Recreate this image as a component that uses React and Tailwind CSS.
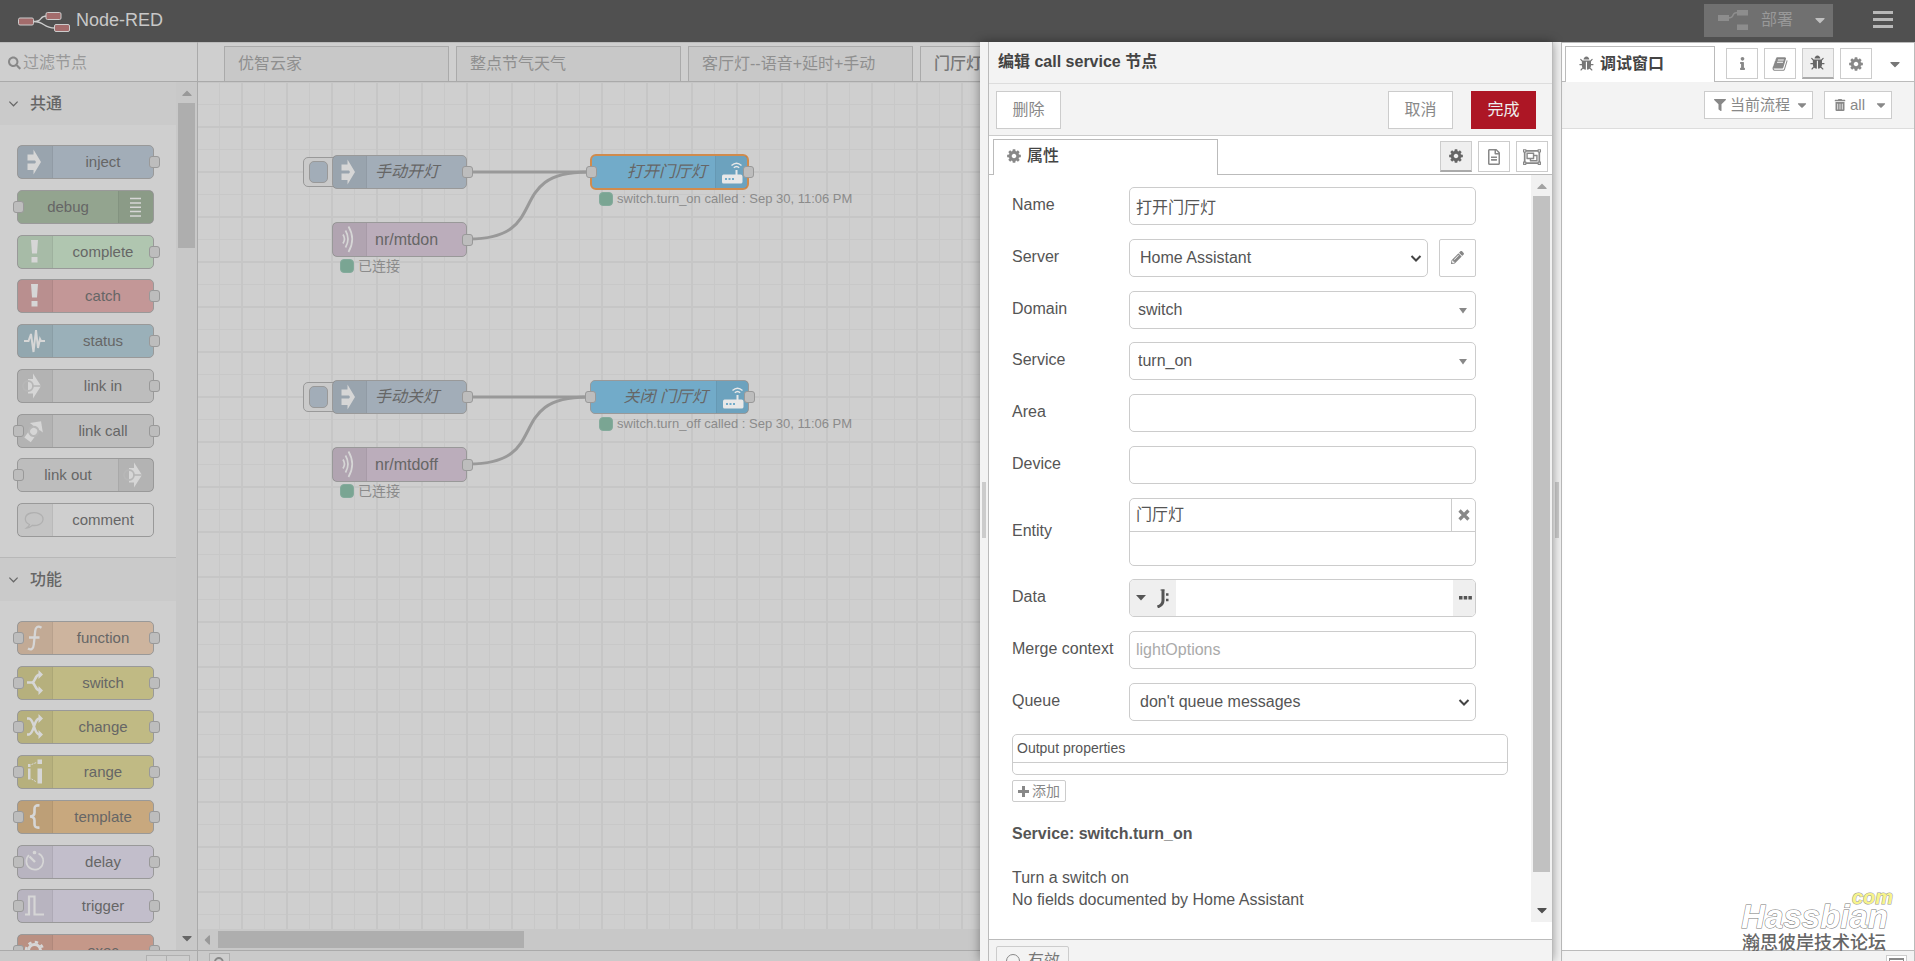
import { useState } from "react";
import {
  FaCaretDown,
  FaFilter,
  FaInfo,
  FaPencilAlt,
  FaRegFileAlt,
  FaRegObjectGroup,
  FaSearch,
  FaTrashAlt,
} from "react-icons/fa";

const CogIcon = ({ className }) => (
  <svg viewBox="0 0 1792 1792" className={className} fill="currentColor">
    <path d="M1152 896q0-106-75-181t-181-75-181 75-75 181 75 181 181 75 181-75 75-181zm512-109v222q0 12-8 23t-20 13l-185 28q-19 54-39 91 35 50 107 138 10 12 10 25t-9 23q-27 37-99 108t-94 71q-12 0-26-9l-138-108q-44 23-91 38-16 136-29 186-7 28-36 28h-222q-14 0-24.5-8.5t-11.5-21.5l-28-184q-49-16-90-37l-141 107q-10 9-25 9-14 0-25-11-126-114-165-168-7-10-7-23 0-12 8-23 15-21 51-66.5t54-70.5q-27-50-41-99l-183-27q-13-2-21-12.5t-8-23.5v-222q0-12 8-23t19-13l186-28q14-46 39-92-40-57-107-138-10-12-10-24 0-10 9-23 26-36 98.5-107.5t94.5-71.5q13 0 26 10l138 107q44-23 91-38 16-136 29-186 7-28 36-28h222q14 0 24.5 8.5t11.5 21.5l28 184q49 16 90 37l142-107q9-9 24-9 13 0 25 10 129 119 165 170 7 8 7 22 0 12-8 23-15 21-51 66.5t-54 70.5q26 50 41 98l183 28q13 2 21 12.5t8 23.5z" />
  </svg>
);

const BugIcon = ({ className }) => (
  <svg viewBox="0 0 1792 1792" className={className} fill="currentColor">
    <path d="M1632 960q0 26-19 45t-45 19h-224q0 171-67 290l208 209q19 19 19 45t-19 45q-18 19-45 19t-45-19l-198-197q-5 5-15 13t-42 28.5-65 36.5-82 29-97 13v-896h-128v896q-51 0-101.5-13.5t-87-33-66-39-43.5-32.5l-15-14-183 207q-20 21-48 21-24 0-43-16-19-18-20.5-44.5t15.5-46.5l202-227q-58-114-58-274h-224q-26 0-45-19t-19-45 19-45 45-19h224v-294l-173-173q-19-19-19-45t19-45 45-19 45 19l173 173h844l173-173q19-19 45-19t45 19 19 45-19 45l-173 173v294h224q26 0 45 19t19 45zm-480-576h-640q0-133 93.5-226.5t226.5-93.5 226.5 93.5 93.5 226.5z" />
  </svg>
);

const BookIcon = ({ className }) => (
  <svg viewBox="0 0 1792 1792" className={className} fill="currentColor">
    <path d="M1703 478q40 57 18 129l-275 906q-19 64-76.5 107.5t-122.5 43.5h-923q-77 0-148.5-53.5t-99.5-131.5q-24-67-2-127 0-4 3-27t4-37q1-8-3-21.5t-3-19.5q2-11 8-21t16.5-23.5 16.5-23.5q23-38 45-91.5t30-91.5q3-10 .5-30t-.5-28q3-11 17-28t17-23q21-36 42-92t25-90q1-9-2.5-32t.5-28q4-13 22-30.5t22-22.5q19-26 42.5-84.5t27.5-96.5q1-8-3-25.5t-2-26.5q2-8 9-18t18-23 17-21q8-12 16.5-30.5t15-35 16-36 19.5-32 26.5-23.5 36-11.5 47.5 5.5l-1 3q38-9 51-9h761q74 0 114 56t18 130l-274 906q-36 119-71.5 153.5t-128.5 34.5h-869q-27 0-38 15-11 16-1 43 24 70 144 70h923q29 0 56-15.5t35-41.5l300-987q7-22 5-57 38 15 59 43zm-1064 2q-4 13 2 22.5t20 9.5h608q13 0 25.5-9.5t16.5-22.5l21-64q4-13-2-22.5t-20-9.5h-608q-13 0-25.5 9.5t-16.5 22.5zm-83 256q-4 13 2 22.5t20 9.5h608q13 0 25.5-9.5t16.5-22.5l21-64q4-13-2-22.5t-20-9.5h-608q-13 0-25.5 9.5t-16.5 22.5z" />
  </svg>
);

const ICON_SHAPES = {
  inject: (
    <path
      fill="currentColor"
      d="M10.5 9.5H16.5V4.5L24 17L16.5 29.5V25H10.5V18.5H18L19 17L18 15.5H10.5z"
    />
  ),
  debug: (
    <path
      stroke="currentColor"
      strokeWidth="1.5"
      d="M12 8.5h11M12 13h11M12 17.2h11M12 21.5h11M12 26h11"
    />
  ),
  alert: (
    <path fill="currentColor" d="M14 5h7l-1 13.5h-5zM14.5 22h6v5.5h-6z" />
  ),
  status: (
    <path
      stroke="currentColor"
      strokeWidth="2"
      fill="none"
      d="M7 17H11.5L14 10L16.5 28L19 6L21 24L23 15L24 17H28"
    />
  ),
  link: (
    <>
      <path fill="currentColor" d="M11 10h5V4.5L24 17L16 29.5V24.5H11z" />
      <circle cx="11" cy="17" r="5" fill="none" stroke="#b7b7b7" strokeWidth="1.8" />
      <path d="M16 17H24" stroke="#b7b7b7" strokeWidth="1.6" />
    </>
  ),
  call: (
    <g transform="rotate(-54 17 17)">
      <path fill="currentColor" d="M6 13H21V9L29 17L21 25V21H6z" />
      <circle cx="16.5" cy="17" r="4.6" fill="currentColor" stroke="#b7b7b7" strokeWidth="2.2" />
    </g>
  ),
  comment: (
    <path
      fill="none"
      stroke="#b0b0b0"
      strokeWidth="1.3"
      d="M12.5 21.5C6.5 19 7 11.500 14 10C20 8.8 26.5 11.5 26 16.5C25.5 21.5 19.5 23 15.5 22.3C13.5 24 11.5 25 9.5 25C11 24 12.3 23 12.5 21.5z"
    />
  ),
  fn: (
    <path
      fill="none"
      stroke="currentColor"
      strokeWidth="2.3"
      d="M24.5 6.8C20.5 4.3 18.6 6.5 18.2 10L16.8 23.5C16.3 28.5 14 29.3 11 27.6M12 16.5H22.5"
    />
  ),
  switch: (
    <g fill="none" stroke="currentColor" strokeWidth="2.6">
      <path d="M10 16.5H15.5C18.5 15 18 9 22.5 8.5M15.5 16.5C18.5 18 18 24 22.5 24.5" />
      <path fill="currentColor" stroke="none" d="M21.5 4L26 8.5L21.5 13zM21.5 20L26 24.5L21.5 29z" />
    </g>
  ),
  change: (
    <g fill="none" stroke="currentColor" strokeWidth="2.5">
      <path d="M10 8.5H12C17.5 9.5 16.5 23.5 22 24.5M10 24.5H12C17.5 23.5 16.5 9.5 22 8.5" />
      <path fill="currentColor" stroke="none" d="M21.5 4L26 8.5L21.5 13zM21.5 20L26 24.5L21.5 29z" />
    </g>
  ),
  range: (
    <g fill="currentColor">
      <path d="M11 9h2.500v3H11zM11 13.500h2.5v11H11zM20.500 4.500h4.5v4.500h-4.5zM20.500 13.500h4.500v15h-4.500z" />
      <path fill="none" stroke="currentColor" strokeDasharray="2 1" d="M14.5 9.5L19.5 7.5M14.5 24L19.5 27" />
    </g>
  ),
  template: (
    <path
      fill="none"
      stroke="currentColor"
      strokeWidth="2.6"
      d="M22.5 5.5C18.5 5 17.5 6.5 17.5 9V12.500C17.5 15 16.5 16.3 13 16.5C16.5 16.7 17.5 18 17.5 20.5V24C17.5 26.5 18.5 28 22.500 27.5"
    />
  ),
  delay: (
    <g fill="none" stroke="currentColor" strokeWidth="1.7">
      <path d="M12 10A8.5 8.5 0 1 0 21.5 8.5" />
      <path strokeWidth="2.4" d="M12.5 11.5L18 17" />
      <circle cx="17.5" cy="7.5" r="1" fill="currentColor" />
    </g>
  ),
  trigger: (
    <path
      fill="none"
      stroke="currentColor"
      strokeWidth="2.2"
      d="M8 25.5H12V7.5H17.5V25.5H27"
    />
  ),
  exec: (
    <svg x="7" y="6" width="21" height="21" viewBox="0 0 21 21">
      <circle cx="10.5" cy="10.5" r="6" fill="none" stroke="currentColor" strokeWidth="3" />
      <circle cx="10.5" cy="10.5" r="8.5" fill="none" stroke="currentColor" strokeWidth="2.5" strokeDasharray="3.34 3.34" />
    </svg>
  ),
  mqtt: (
    <g fill="none" stroke="currentColor" strokeWidth="1.7">
      <path d="M11 12.5Q14 17 11 21.5M13.5 8.5Q18.5 17 13.5 25.5M16.5 4.5Q24 17 16.5 30" />
    </g>
  ),
  router: (
    <g fill="currentColor">
      <path d="M8.5 19.5H20.5V15H22.5V19.5H25.5Q27.5 19.5 27.5 21.5V27Q27.5 28.5 25.5 28.5H8.5Q7 28.5 7 27V21.5Q7 19.5 8.5 19.5z" />
      <path fill="#72abc9" d="M10 23h2v2h-2zM13.5 23h2v2h-2zM17 23h2v2h-2z" />
      <path
        fill="none"
        stroke="currentColor"
        strokeWidth="1.4"
        d="M18.8 12.8Q21.5 10.2 24.2 12.8M16.5 10.5Q21.5 5.8 26.5 10.5"
      />
    </g>
  ),
};

const NodeIcon = ({ name, className }) => (
  <svg viewBox="0 0 34 34" width="34" height="34" className={className}>
    {ICON_SHAPES[name]}
  </svg>
);

const Port = ({ className }) => (
  <span
    className={`absolute top-1/2 -translate-y-1/2 w-[11px] h-3 rounded-[3px] border border-[#999] bg-[#bdbdbd] ${className}`}
  />
);

const commonNodes = [
  { label: "inject", icon: "inject", color: "bg-[#a2adb8]", out: true },
  { label: "debug", icon: "debug", color: "bg-[#93a48f]", in: true, right: true },
  { label: "complete", icon: "alert", color: "bg-[#b0c6b0]", out: true },
  { label: "catch", icon: "alert", color: "bg-[#c39797]", out: true },
  { label: "status", icon: "status", color: "bg-[#9ab0b9]", out: true },
  { label: "link in", icon: "link", color: "bg-[#bdbdbd]", out: true },
  { label: "link call", icon: "call", color: "bg-[#bdbdbd]", in: true, out: true },
  { label: "link out", icon: "link", color: "bg-[#bdbdbd]", in: true, right: true },
  { label: "comment", icon: "comment", color: "bg-[#cfcfcf]" },
];

const functionNodes = [
  { label: "function", icon: "fn", color: "bg-[#cdb49e]", in: true, out: true },
  { label: "switch", icon: "switch", color: "bg-[#c0ba84]", in: true, out: true },
  { label: "change", icon: "change", color: "bg-[#c0ba84]", in: true, out: true },
  { label: "range", icon: "range", color: "bg-[#c0ba84]", in: true, out: true },
  { label: "template", icon: "template", color: "bg-[#c8a87e]", in: true, out: true },
  { label: "delay", icon: "delay", color: "bg-[#c2becb]", in: true, out: true },
  { label: "trigger", icon: "trigger", color: "bg-[#c2becb]", in: true, out: true },
  { label: "exec", icon: "exec", color: "bg-[#c59889]", in: true, out: true },
];

const PaletteNode = ({ node }) => (
  <div
    className={`relative shrink-0 flex w-[137px] h-[34px] rounded-[5px] border border-[#999] text-[15px] text-[#666] ${
      node.color
    } ${node.right ? "flex-row-reverse" : ""}`}
  >
    <div
      className={`w-[35px] shrink-0 overflow-hidden border-black/5 bg-black/5 text-[#d6d6d6] ${
        node.right ? "border-l" : "border-r"
      }`}
    >
      <NodeIcon name={node.icon} className="-mt-px -ml-px" />
    </div>
    <span className="flex-1 text-center leading-8">{node.label}</span>
    {node.in && <Port className="-left-[5px]" />}
    {node.out && <Port className="-right-[7px]" />}
  </div>
);

const PaletteCategory = ({ title, children }) => (
  <>
    <h2 className="shrink-0 flex items-center h-[43px] pl-2 bg-[#cacaca] text-base font-medium text-[#666]">
      <svg viewBox="0 0 12 12" className="w-[11px] h-[11px] mr-[11px]" fill="none" stroke="currentColor" strokeWidth="1.3">
        <path d="M1.5 4L6 8.5L10.5 4" />
      </svg>
      {title}
    </h2>
    {children}
  </>
);

const Palette = () => (
  <aside className="w-[198px] shrink-0 flex flex-col border-r border-[#aaa]">
    <label className="flex items-center h-10 shrink-0 pl-2 pt-[2px] border-t border-b border-t-[#bbb] border-b-[#aaa]">
      <FaSearch className="w-[14px] h-[14px] mr-[2px] text-[#888]" />
      <input
        type="text"
        aria-label="过滤节点"
        placeholder="过滤节点"
        className="w-full bg-transparent outline-none text-base placeholder:text-[#999]"
      />
    </label>
    <div className="flex-1 min-h-0 flex">
      <div className="flex-1 flex flex-col overflow-hidden">
        <PaletteCategory title="共通">
          <div className="shrink-0 flex flex-col justify-between h-[392px] ml-[17px] my-5">
            {commonNodes.map((node) => (
              <PaletteNode key={node.label} node={node} />
            ))}
          </div>
        </PaletteCategory>
        <div className="border-t border-[#b8b8b8]" />
        <PaletteCategory title="功能">
          <div className="shrink-0 flex flex-col justify-between h-[347px] ml-[17px] mt-5">
            {functionNodes.map((node) => (
              <PaletteNode key={node.label} node={node} />
            ))}
          </div>
        </PaletteCategory>
      </div>
      <div className="w-[21px] flex flex-col items-center bg-[#c8c8c8] pt-1 pb-1">
        <FaCaretDown className="rotate-180 w-4 h-4 text-[#999] shrink-0" />
        <div className="w-[17px] h-[145px] mt-px bg-[#aeaeae]" />
        <div className="flex-1" />
        <FaCaretDown className="w-4 h-4 text-[#666] shrink-0" />
      </div>
    </div>
    <div className="flex justify-end h-[11px] shrink-0 overflow-hidden border-t border-[#aaa] bg-[#cacaca] pt-1 pr-[7px]">
      <button aria-label="折叠" className="w-[21px] h-5 border border-[#b0b0b0] bg-[#cecece]" />
      <button aria-label="展开" className="w-[23px] h-5 border border-l-0 border-[#b0b0b0] bg-[#cecece]" />
    </div>
  </aside>
);

const flows = ["优智云家", "整点节气天气", "客厅灯--语音+延时+手动"];

const StatusLine = ({ className, children }) => (
  <div className={`absolute flex items-center gap-1 h-4 whitespace-nowrap text-[#8b8b8b] ${className}`}>
    <span className="w-[14px] h-[14px] rounded-[4px] border border-[#84ab9c] bg-[#7aa593]" />
    {children}
  </div>
);

// one trigger + one mqtt input wired to a call service node
const FlowGroup = ({ className, inject, topic, service, status, selected }) => (
  <div className={`absolute left-[105px] w-[580px] h-[120px] text-base text-[#666] ${className}`}>
    <svg width="580" height="120" className="absolute inset-0" fill="none" stroke="#999" strokeWidth="3">
      <path d="M166 18H284" />
      <path d="M166 85C250 85 200 18 284 18" />
    </svg>
    <button
      aria-label={inject}
      className="absolute left-0 top-[3px] w-10 h-[30px] rounded-[5px] border border-[#999] bg-[#cacaca]"
    >
      <span className="absolute left-[5px] top-[3px] w-[19px] h-[22px] rounded-[5px] border border-[#999] bg-[#a2adb8]" />
    </button>
    <div className="absolute left-[29px] top-px flex w-[135px] h-[34px] rounded-[5px] border border-[#999] bg-[#a2adb8]">
      <div className="w-[34px] overflow-hidden border-r border-black/5 bg-black/5 text-[#d6d6d6]">
        <NodeIcon name="inject" className="-mt-px -ml-[2px]" />
      </div>
      <span className="pl-2 italic leading-8">{inject}</span>
      <Port className="-right-[7px]" />
    </div>
    <div className="absolute left-[29px] top-[68px] flex w-[135px] h-[35px] rounded-[5px] border border-[#999] bg-[#bbadbb]">
      <div className="w-[34px] overflow-hidden border-r border-black/5 bg-black/5 text-[#d6d6d6]">
        <NodeIcon name="mqtt" className="-mt-px -ml-px" />
      </div>
      <span className="pl-2 leading-[34px]">{topic}</span>
      <Port className="-right-[7px]" />
    </div>
    <StatusLine className="left-[37px] top-[104px] text-sm">已连接</StatusLine>
    <div
      className={`absolute left-[287px] flex justify-end w-[159px] bg-[#72abc9] ${
        selected
          ? "top-0 h-9 rounded-[6px] border-2 border-[#d08b4d]"
          : "top-px h-[34px] rounded-[5px] border border-[#999]"
      }`}
    >
      <span className="pr-2 italic leading-8">{service}</span>
      <div className="w-8 overflow-hidden border-l border-black/5 bg-black/5 text-[#e8e8e8]">
        <NodeIcon name="router" className="-mt-px -ml-px" />
      </div>
      <Port className="-left-[6px]" />
      <Port className="-right-[7px]" />
    </div>
    <StatusLine className="left-[296px] top-[37px] text-[13px] leading-[18px]">{status}</StatusLine>
  </div>
);

const Workspace = () => (
  <main className="flex-1 min-w-0 flex flex-col overflow-hidden">
    <nav className="shrink-0 flex items-end gap-[7px] h-10 pl-[26px] border-t border-b border-t-[#bbb] border-b-[#aaa] overflow-hidden">
      {flows.map((name) => (
        <button
          key={name}
          className="shrink-0 w-[225px] h-[35px] px-[13px] text-left text-base text-[#8f8f8f] whitespace-nowrap border border-b-0 border-[#aaa] bg-[#c8c8c8]"
        >
          {name}
        </button>
      ))}
      <button className="shrink-0 w-[225px] h-[35px] px-[13px] text-left text-base font-medium text-[#777] whitespace-nowrap border border-b-0 border-[#aaa]">
        门厅灯
      </button>
    </nav>
    <div className="relative flex-1 overflow-hidden">
      <svg className="absolute inset-0 w-full h-full">
        <defs>
          <pattern id="grid" width="45" height="45" x="-1" y="0" patternUnits="userSpaceOnUse">
            <path d="M0 22.5H45M22.5 0V45" stroke="#c8c8c8" strokeWidth="1" />
            <path d="M0 45H45M45 0V45M0 0H45M0 0V45" stroke="#c6c6c6" strokeWidth="2" />
          </pattern>
        </defs>
        <rect width="100%" height="100%" fill="url(#grid)" />
      </svg>
      <FlowGroup
        className="top-[72px]"
        inject="手动开灯"
        topic="nr/mtdon"
        service="打开门厅灯"
        status="switch.turn_on called : Sep 30, 11:06 PM"
        selected
      />
      <FlowGroup
        className="top-[297px]"
        inject="手动关灯"
        topic="nr/mtdoff"
        service="关闭 门厅灯"
        status="switch.turn_off called : Sep 30, 11:06 PM"
      />
    </div>
    <div className="shrink-0 flex items-center h-[21px] bg-[#c8c8c8]">
      <FaCaretDown className="rotate-90 w-4 h-4 ml-[2px] mr-[2px] text-[#999]" />
      <div className="w-[306px] h-[17px] bg-[#aeaeae]" />
    </div>
    <div className="h-[11px] shrink-0 overflow-hidden border-t border-[#aaa] bg-[#cacaca] pt-[2px] pl-[11px]">
      <button aria-label="搜索" className="flex justify-center pt-[3px] w-[21px] h-5 border border-[#b0b0b0] bg-[#cecece]">
        <FaSearch className="w-3 h-3 text-[#888]" />
      </button>
    </div>
  </main>
);

const Separator = () => (
  <div className="w-2 shrink-0 flex flex-col items-center justify-center pt-4 bg-[#f3f3f3]">
    <div className="w-1 h-14 bg-[#ccc]" />
  </div>
);

const IconButton = ({ active, label, children }) => (
  <button
    aria-label={label}
    className={`flex items-center justify-center w-8 h-[31px] border ${
      active
        ? "border-[#ccc] border-b-2 border-b-[#aaa] bg-[#efefef] text-[#666]"
        : "border-[#ccc] bg-white text-[#888]"
    }`}
  >
    {children}
  </button>
);

const inputClass =
  "w-full h-[38px] px-[6px] border border-[#ccc] rounded-[5px] bg-white text-base text-[#555] outline-none placeholder:text-[#aaa]";

const Row = ({ id, label, children }) => (
  <div className="flex items-center">
    <label htmlFor={id} className="w-[117px] shrink-0 pb-[2px]">
      {label}
    </label>
    {children}
  </div>
);

const Chevron = () => (
  <svg viewBox="0 0 12 12" className="absolute right-[6px] top-[13px] w-3 h-3 pointer-events-none" fill="none" stroke="#444" strokeWidth="2">
    <path d="M1.5 4L6 8.5L10.5 4" />
  </svg>
);

const Select = ({ id, value, caret }) => (
  <div className="relative flex-1">
    <select id={id} className={`${inputClass} appearance-none ${caret ? "pl-[8px]" : "pl-[10px]"}`}>
      <option>{value}</option>
    </select>
    {caret ? (
      <svg viewBox="0 0 8 6" className="absolute right-[9px] top-[17px] w-2 h-[6px] pointer-events-none" fill="#888">
        <path d="M0 0H8L4 5.5z" />
      </svg>
    ) : (
      <Chevron />
    )}
  </div>
);

const EditTray = () => {
  const [name, setName] = useState("打开门厅灯");
  const [entity, setEntity] = useState("门厅灯");
  return (
    <section className="w-[565px] shrink-0 flex flex-col border-l border-r border-[#bbb] bg-white">
      <h1 className="shrink-0 h-[42px] pl-[9px] leading-10 text-base font-bold text-[#444] bg-[#f3f3f3] border-b border-[#ddd]">
        编辑 call service 节点
      </h1>
      <div className="shrink-0 flex items-center h-[52px] pl-[7px] pr-4 bg-[#f3f3f3] border-b border-[#ccc] text-base">
        <button className="w-[65px] h-[38px] border border-[#ccc] bg-white text-[#888]">删除</button>
        <button className="ml-auto w-[65px] h-[38px] border border-[#ccc] bg-white text-[#888]">取消</button>
        <button className="ml-[18px] w-[65px] h-[38px] bg-[#ad1625] text-[#eee]">完成</button>
      </div>
      <div className="shrink-0 flex h-[39px] pl-1 pr-1 pt-[3px] border-b border-[#bbb]">
        <button className="flex items-center gap-[5px] w-[225px] h-9 pl-3 pb-1 border border-b-0 border-[#bbb] bg-white text-base font-medium text-[#444]">
          <CogIcon className="w-4 h-4 text-[#888]" />
          属性
        </button>
        <div className="ml-auto flex gap-[6px] pt-[2px]">
          <IconButton active label="属性">
            <CogIcon className="w-4 h-4" />
          </IconButton>
          <IconButton label="描述">
            <FaRegFileAlt className="w-4 h-4" />
          </IconButton>
          <IconButton label="外观">
            <FaRegObjectGroup className="w-[18px] h-[18px]" />
          </IconButton>
        </div>
      </div>
      <div className="flex-1 min-h-0 flex pb-[17px]">
        <div className="flex-1 pl-[23px] pt-3 overflow-hidden text-base text-[#555]">
          <form className="flex flex-col justify-between w-[464px] h-[534px]">
            <Row id="name" label="Name">
              <input id="name" value={name} onChange={(e) => setName(e.target.value)} className={inputClass} />
            </Row>
            <Row id="server" label="Server">
              <Select id="server" value="Home Assistant" />
              <button type="button" aria-label="编辑" className="flex items-center justify-center ml-[11px] w-[37px] h-[38px] border border-[#ccc] rounded-[2px] text-[#888]">
                <FaPencilAlt className="w-[13px] h-[13px]" />
              </button>
            </Row>
            <Row id="domain" label="Domain">
              <Select id="domain" value="switch" caret />
            </Row>
            <Row id="service" label="Service">
              <Select id="service" value="turn_on" caret />
            </Row>
            <Row id="area" label="Area">
              <input id="area" className={inputClass} />
            </Row>
            <Row id="device" label="Device">
              <input id="device" className={inputClass} />
            </Row>
            <Row id="entity" label="Entity">
              <div className="flex-1 h-[68px] border border-[#ccc] rounded-[5px] overflow-hidden">
                <div className="flex h-[33px] border-b border-[#ccc]">
                  <input id="entity" value={entity} onChange={(e) => setEntity(e.target.value)} className="flex-1 min-w-0 px-[6px] outline-none" />
                  <button type="button" aria-label="移除" className="flex items-center justify-center w-6 border-l border-[#ccc] text-[#888]">
                    <svg viewBox="0 0 12 12" className="w-3 h-3" stroke="currentColor" strokeWidth="3.2">
                      <path d="M1.5 1.5L10.5 10.5M10.5 1.5L1.5 10.5" />
                    </svg>
                  </button>
                </div>
                <input aria-label="Entity" className="w-full h-[33px] px-[6px] outline-none" />
              </div>
            </Row>
            <Row id="data" label="Data">
              <div className="flex flex-1 h-[38px] border border-[#ccc] rounded-[5px] overflow-hidden">
                <button type="button" aria-label="类型" className="flex items-center w-[46px] pl-[6px] gap-[11px] bg-[#efefef] text-[#555]">
                  <svg viewBox="0 0 10 6" className="w-[10px] h-[6px]" fill="currentColor">
                    <path d="M0 0H10L5 5.5z" />
                  </svg>
                  <svg viewBox="0 0 12 19" className="w-3 h-[19px]" fill="none" stroke="currentColor">
                    <path strokeWidth="3" d="M6 .5V11.5C6 14.5 4.5 16.5 .5 18" />
                    <path strokeWidth="1" d="M3.500 1H7.500" />
                    <path strokeWidth="2.4" d="M9 5.5H11.5M9 11H11.5" />
                  </svg>
                </button>
                <input id="data" className="flex-1 min-w-0 px-[6px] outline-none" />
                <button type="button" aria-label="展开" className="flex items-center justify-end pr-[3px] w-[22px] bg-[#efefef] text-[#555]">
                  <svg viewBox="0 0 13 4" className="w-[13px] h-1" fill="currentColor">
                    <path d="M0 0h3.5v3.5H0zM4.7 0h3.5v3.5H4.7zM9.4 0h3.5v3.5H9.4z" />
                  </svg>
                </button>
              </div>
            </Row>
            <Row id="context" label="Merge context">
              <input id="context" placeholder="lightOptions" className={inputClass} />
            </Row>
            <Row id="queue" label="Queue">
              <Select id="queue" value="don't queue messages" />
            </Row>
          </form>
          <div className="w-[496px] h-[41px] mt-[13px] border border-[#ccc] rounded-[5px] text-sm">
            <div className="h-7 pl-1 leading-[26px] border-b border-[#ccc]">Output properties</div>
          </div>
          <button className="flex items-center justify-center gap-[3px] mt-[5px] w-[54px] h-[22px] border border-[#ccc] rounded-[2px] text-sm text-[#888]">
            <svg viewBox="0 0 11 11" className="w-[11px] h-[11px]" stroke="currentColor" strokeWidth="3">
              <path d="M5.5 0V11M0 5.5H11" />
            </svg>
            添加
          </button>
          <p className="mt-[21px] leading-[22px] font-bold">Service: switch.turn_on</p>
          <p className="mt-[22px] leading-[22px]">Turn a switch on</p>
          <p className="leading-[22px]">No fields documented by Home Assistant</p>
        </div>
        <div className="w-[21px] flex flex-col items-center bg-[#f1f1f1] pt-1 pb-1">
          <FaCaretDown className="rotate-180 w-4 h-4 text-[#a3a3a3] shrink-0" />
          <div className="w-[17px] h-[676px] mt-px bg-[#c1c1c1]" />
          <div className="flex-1" />
          <FaCaretDown className="w-4 h-4 text-[#505050] shrink-0" />
        </div>
      </div>
      <div className="h-[22px] shrink-0 overflow-hidden border-t border-[#bbb] bg-[#f3f3f3] pt-[6px] pl-[7px]">
        <button className="flex items-center gap-2 w-[73px] h-8 pl-[9px] pb-[2px] border border-[#ccc] rounded-[2px] text-base text-[#777]">
          <span className="w-[14px] h-[14px] rounded-full border border-[#888]" />
          有效
        </button>
      </div>
    </section>
  );
};

const Sidebar = () => (
  <aside className="w-[354px] shrink-0 flex flex-col border border-b-0 border-[#bbb] bg-white">
    <div className="shrink-0 flex h-[39px] pl-[3px] pt-[3px] border-b border-[#bbb]">
      <button className="flex items-center gap-[5px] w-[150px] h-9 pl-[13px] pb-[2px] border border-b-0 border-[#bbb] bg-white text-base font-bold text-[#444]">
        <BugIcon className="w-4 h-4 text-[#777]" />
        调试窗口
      </button>
      <div className="flex gap-[6px] ml-[11px] pt-[2px]">
        <IconButton label="信息">
          <FaInfo className="w-[13px] h-[13px]" />
        </IconButton>
        <IconButton label="帮助">
          <BookIcon className="w-4 h-4" />
        </IconButton>
        <IconButton active label="调试">
          <BugIcon className="w-4 h-4" />
        </IconButton>
        <IconButton label="配置">
          <CogIcon className="w-4 h-4" />
        </IconButton>
      </div>
      <button aria-label="更多" className="ml-[15px] text-[#777]">
        <FaCaretDown className="w-4 h-4" />
      </button>
    </div>
    <div className="shrink-0 flex justify-end items-start gap-[11px] h-[47px] pt-[9px] pr-[22px] bg-[#f3f3f3] border-b border-[#ddd] text-[15px] text-[#888]">
      <button className="flex items-center gap-1 h-7 pl-[9px] pr-[3px] border border-[#ccc] bg-white">
        <FaFilter className="w-3 h-3" />
        当前流程
        <FaCaretDown className="w-[14px] h-[14px] ml-px" />
      </button>
      <button className="flex items-center gap-1 h-7 pl-[9px] pr-[3px] border border-[#ccc] bg-white">
        <FaTrashAlt className="w-3 h-3" />
        all
        <FaCaretDown className="w-[14px] h-[14px] ml-[5px]" />
      </button>
    </div>
    <div className="flex-1" />
    <div className="flex justify-end h-[11px] shrink-0 overflow-hidden border-t border-[#bbb] bg-[#f3f3f3] pt-1 pr-[7px]">
      <button aria-label="打开新窗口" className="flex justify-center pt-[2px] w-[21px] h-5 border border-[#ccc] bg-white">
        <span className="w-[15px] h-3 border border-t-2 border-[#888]" />
      </button>
    </div>
  </aside>
);

const Header = () => (
  <header className="shrink-0 flex items-center h-[42px] pl-[18px] pr-[22px] pb-[2px] bg-[#505050]">
    <svg width="52" height="20" viewBox="0 0 52 20" className="mt-1">
      <path d="M15 9.5C26 9.5 20 4 29 4M15 9.5C28 9.5 24 16 37 16" fill="none" stroke="#ccc" strokeWidth="1.3" />
      <g fill="#a36c6c" stroke="#ccc">
        <rect x=".5" y="6" width="15" height="7" rx="1.5" />
        <rect x="28" y=".5" width="15" height="7" rx="1.5" />
        <rect x="36.5" y="12.5" width="15" height="7" rx="1.5" />
      </g>
    </svg>
    <span className="ml-[6px] text-lg text-[#c8c8c8]">Node-RED</span>
    <button className="ml-auto flex items-center w-[129px] h-[33px] pl-[14px] bg-[#707070] text-base text-[#999]">
      <svg width="30" height="20" viewBox="0 0 30 20">
        <path d="M10 8C18 8 12 2.5 20 2.5" fill="none" stroke="#8d8d8d" strokeWidth="1.5" />
        <path fill="#8d8d8d" d="M0 5h11v6H0zM19 0h11v5.5H19zM19 14.5h11v5.5H19z" />
      </svg>
      <span className="ml-[13px]">部署</span>
      <FaCaretDown className="ml-auto mr-[5px] w-4 h-4 text-[#c0c0c0]" />
    </button>
    <button aria-label="菜单" className="flex flex-col gap-1 ml-10 mb-[2px] w-5">
      <span className="w-5 h-[3px] bg-[#b8b8b8]" />
      <span className="w-5 h-[3px] bg-[#b8b8b8]" />
      <span className="w-5 h-[3px] bg-[#b8b8b8]" />
    </button>
  </header>
);

const Watermark = () => (
  <div className="absolute right-[22px] bottom-2 flex flex-col items-end pointer-events-none">
    <span className="text-xl leading-4 font-bold italic text-[#f7f48b] [-webkit-text-stroke:1px_#999] [paint-order:stroke]">
      com
    </span>
    <span className="mr-[5px] -mt-1 text-[33px] leading-8 font-bold italic text-white [-webkit-text-stroke:1px_#777] [paint-order:stroke]">
      Hassbian
    </span>
    <span className="mr-[7px] text-lg leading-5 font-medium text-[#666]">瀚思彼岸技术论坛</span>
  </div>
);

const App = () => {
  return (
    <div className="relative flex flex-col h-screen overflow-hidden bg-[#cfcfcf] font-['Liberation_Sans','Noto_Sans_CJK_SC',sans-serif]">
      <Header />
      <div className="flex-1 min-h-0 flex">
        <Palette />
        <Workspace />
        <div className="relative flex shrink-0 shadow-[0_0_10px_rgba(0,0,0,0.4)]">
          <Separator />
          <EditTray />
        </div>
        <Separator />
        <Sidebar />
      </div>
      <Watermark />
    </div>
  );
};

export default App;
